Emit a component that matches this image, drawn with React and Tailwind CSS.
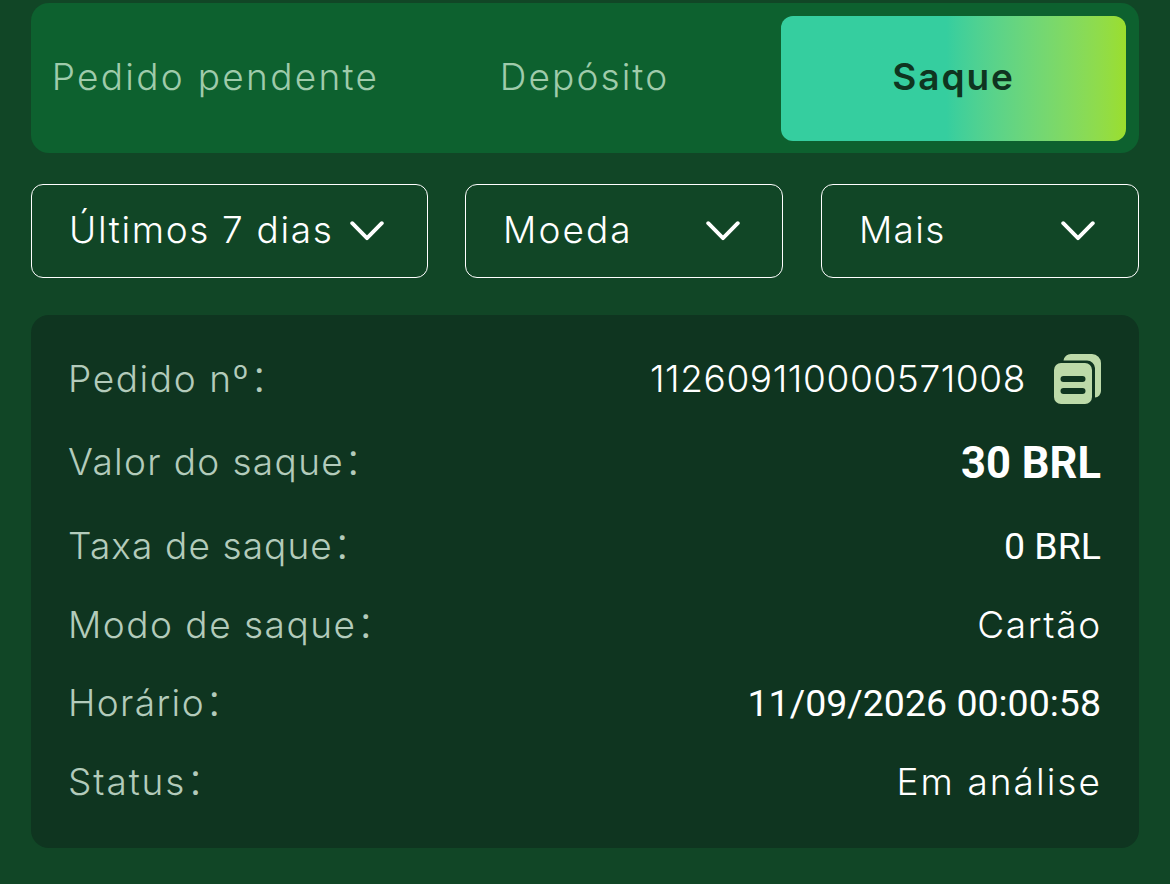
const tabs = [
  { label: 'Pedido pendente', className: 'tracking-[2.3px]' },
  { label: 'Depósito', className: 'tracking-[2.1px]' },
  { label: 'Saque', active: true, className: 'tracking-[1.9px]' },
]

const filters = [
  { label: 'Últimos 7 dias', className: 'w-[397px] pr-[43px]', text: 'tracking-[1.65px]' },
  { label: 'Moeda', className: 'w-[318px] pr-[42px]', text: 'tracking-[2.1px]' },
  { label: 'Mais', className: 'w-[318px] pr-[43px]', text: 'tracking-[1.3px]' },
]

const rows = [
  { label: 'Pedido nº', value: '112609110000571008', copy: true, height: 'h-[82px]', labelClass: 'pb-0.5 tracking-[1.6px]', valueClass: 'pb-0.5 font-light tracking-[0.6px]' },
  { label: 'Valor do saque', value: '30 BRL', height: 'h-[84px]', labelClass: 'pb-0.5 tracking-[1.35px]', valueClass: "font-['Roboto'] font-bold text-[43.5px] pt-[3px]" },
  { label: 'Taxa de saque', value: '0 BRL', height: 'h-[83px]', labelClass: 'tracking-[1.1px]', valueClass: "font-['Roboto'] text-[37.5px] pt-0.5" },
  { label: 'Modo de saque', value: 'Cartão', height: 'h-[77px]', labelClass: 'pb-0.5 tracking-[1.5px]', valueClass: 'pb-0.5 font-light tracking-[1.7px] -mr-px' },
  { label: 'Horário', value: '11/09/2026 00:00:58', height: 'h-[78px]', labelClass: 'pb-0.5 tracking-[1.4px]', valueClass: "font-['Roboto'] text-[37.5px] pt-0.5" },
  { label: 'Status', value: 'Em análise', height: 'h-[80px]', labelClass: 'pb-0.5 tracking-[1.9px]', valueClass: 'pb-0.5 font-light tracking-[2.05px] -mr-px' },
]

function Chevron() {
  return (
    <svg width="34" height="20" viewBox="0 0 34 20" fill="none" className="shrink-0">
      <path d="M2.2 2.2L17 17.2L31.8 2.2" stroke="#fff" strokeWidth="3.8" strokeLinecap="round" strokeLinejoin="round" />
    </svg>
  )
}

function CopyIcon() {
  return (
    <svg width="47" height="50" viewBox="0 0 47 50" className="shrink-0">
      <path d="M9.5 6.5A7.5 7.5 0 0 1 17 0H38A9 9 0 0 1 47 9V37A6.5 6.5 0 0 1 41 43.5V14A8 8 0 0 0 33 6.5Z" fill="#bddaa9" />
      <rect x="0" y="9" width="38" height="41" rx="7" fill="#bddaa9" />
      <path d="M9.5 25H28.5M9.5 37H28.5" stroke="#0f3520" strokeWidth="6" strokeLinecap="round" />
    </svg>
  )
}

export default function App() {
  return (
    <main className="w-[1170px] h-[884px] overflow-hidden bg-[#114626] px-[31px] pt-[3px] font-['Inter','Noto_Sans_CJK_SC',sans-serif] text-[37px] leading-none text-white">
      <nav className="flex h-[150px] items-center justify-between rounded-[18px] bg-[#0d612f] pl-3 pr-[13px]">
        {tabs.map((tab) => (
          <button
            key={tab.label}
            className={`h-[125px] w-[345px] rounded-xl pb-[3px] whitespace-nowrap ${tab.className} ${
              tab.active
                ? 'bg-linear-to-r from-[#35ce9f] from-48% to-[#9bde2c] font-semibold text-[#0f3520]'
                : 'font-light text-[#9fcbab]'
            }`}
          >
            {tab.label}
          </button>
        ))}
      </nav>

      <div className="mt-[31px] flex gap-[37px]">
        {filters.map((filter) => (
          <button
            key={filter.label}
            className={`flex h-[94px] shrink-0 items-center justify-between rounded-xl border border-white pl-[37px] font-light whitespace-nowrap last:ml-px ${filter.className}`}
          >
            <span className={`pb-[3px] ${filter.text}`}>{filter.label}</span>
            <Chevron />
          </button>
        ))}
      </div>

      <section className="mt-[37px] h-[533px] rounded-[18px] bg-[#0f3520] pr-[38px] pl-[37px] pt-[23px]">
        {rows.map((row) => (
          <div key={row.label} className={`flex items-center justify-between whitespace-nowrap ${row.height}`}>
            <span className={`font-light text-[#b3cbbb] ${row.labelClass}`}>{row.label}：</span>
            <div className="flex items-center gap-7">
              <span className={row.valueClass}>{row.value}</span>
              {row.copy && <CopyIcon />}
            </div>
          </div>
        ))}
      </section>
    </main>
  )
}
